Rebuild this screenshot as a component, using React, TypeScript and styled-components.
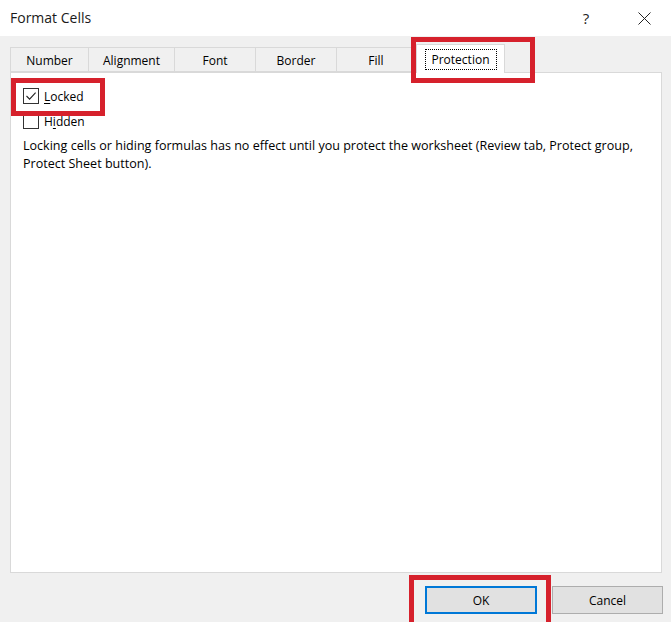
import React from "react";
import styled, { createGlobalStyle } from "styled-components";

const Global = createGlobalStyle`
  html, body { margin: 0; padding: 0; background: #f0f0f0; }
  body { font-family: "Open Sans", "Noto Sans", sans-serif; color: #000; }
`;

const Dialog = styled.div`
  position: relative;
  width: 671px;
  height: 622px;
  background: #f0f0f0;
  display: flex;
  flex-direction: column;
  overflow: hidden;
`;

const TitleBar = styled.div`
  height: 36px;
  background: #fff;
  display: flex;
  align-items: center;
  padding-left: 10px;
  box-sizing: border-box;
`;

const Title = styled.div`
  font-size: 14px;
  color: #1a1a1a;
  flex: 1;
  margin-top: -1px;
`;

const TitleButton = styled.div<{ $w: number }>`
  width: ${(p) => p.$w}px;
  height: 36px;
  display: flex;
  align-items: center;
  justify-content: center;
  font-size: 15px;
  color: #222;
`;

const Body = styled.div`
  padding: 11px 9px 0 10px;
  display: flex;
  flex-direction: column;
`;

const TabRow = styled.div`
  display: flex;
  height: 25px;
  align-items: flex-end;
  position: relative;
  z-index: 1;
`;

const Tab = styled.div<{ $w: number; $active?: boolean }>`
  width: ${(p) => p.$w}px;
  box-sizing: border-box;
  height: ${(p) => (p.$active ? 29 : 25)}px;
  margin-bottom: ${(p) => (p.$active ? -1 : 0)}px;
  background: ${(p) => (p.$active ? "#fff" : "#f0f0f0")};
  border: 1px solid #d9d9d9;
  border-bottom: ${(p) => (p.$active ? "none" : "1px solid #d9d9d9")};
  border-left: ${(p) => (p.$active ? "1px solid #d9d9d9" : "none")};
  &:first-child { border-left: 1px solid #d9d9d9; }
  display: flex;
  align-items: center;
  justify-content: center;
  font-size: 12px;
  padding-top: ${(p) => (p.$active ? 1 : 2)}px;
`;

const FocusLabel = styled.span`
  outline: 1px dotted #000;
  outline-offset: 0;
  padding: 2px 6px;
  line-height: 15px;
`;

const Panel = styled.div`
  height: 501px;
  box-sizing: border-box;
  background: #fff;
  border: 1px solid #d9d9d9;
  padding: 14px 0 0 12px;
  display: flex;
  flex-direction: column;
`;

const CheckRow = styled.label`
  display: flex;
  align-items: center;
  gap: 5px;
  height: 18px;
  font-size: 12px;
  margin-bottom: 7px;
`;

const Box = styled.span`
  width: 16px;
  height: 16px;
  box-sizing: border-box;
  border: 1px solid #333;
  background: #fff;
  display: flex;
  align-items: center;
  justify-content: center;
`;

const U = styled.span`
  text-decoration: underline;
  text-underline-offset: 2px;
`;

const Note = styled.p`
  margin: 0;
  font-size: 12.55px;
  line-height: 18px;
  width: 625px;
`;

const ButtonRow = styled.div`
  display: flex;
  justify-content: flex-end;
  gap: 15px;
  padding-top: 13px;
  margin-right: -1px;
`;

const Button = styled.div<{ $default?: boolean }>`
  width: ${(p) => (p.$default ? 112 : 111)}px;
  height: 28px;
  box-sizing: border-box;
  background: #e1e1e1;
  border: ${(p) => (p.$default ? "2px solid #0078d7" : "1px solid #adadad")};
  display: flex;
  align-items: center;
  justify-content: center;
  font-size: 12px;
  padding-top: 1px;
`;

const Highlight = styled.div<{ $x: number; $y: number; $w: number; $h: number }>`
  position: absolute;
  left: ${(p) => p.$x}px;
  top: ${(p) => p.$y}px;
  width: ${(p) => p.$w}px;
  height: ${(p) => p.$h}px;
  box-sizing: border-box;
  border: 5px solid #d6212c;
  pointer-events: none;
  z-index: 5;
`;

const tabs: { label: string; w: number }[] = [
  { label: "Number", w: 79 },
  { label: "Alignment", w: 86 },
  { label: "Font", w: 81 },
  { label: "Border", w: 81 },
  { label: "Fill", w: 79 },
];

export default function App() {
  return (
    <>
      <Global />
      <Dialog>
        <TitleBar>
          <Title>Format Cells</Title>
          <TitleButton $w={62}>?</TitleButton>
          <TitleButton $w={54}>
            <svg width="13" height="13" viewBox="0 0 13 13">
              <path d="M0.5 0.5 L12.5 12.5 M12.5 0.5 L0.5 12.5" stroke="#222" strokeWidth="1" />
            </svg>
          </TitleButton>
        </TitleBar>
        <Body>
          <TabRow>
            {tabs.map((t) => (
              <Tab key={t.label} $w={t.w}>
                {t.label}
              </Tab>
            ))}
            <Tab $w={89} $active>
              <FocusLabel>Protection</FocusLabel>
            </Tab>
          </TabRow>
          <Panel>
            <CheckRow>
              <Box>
                <svg width="12" height="12" viewBox="0 0 12 12">
                  <path d="M1.5 6 L4.6 9.1 L10.6 2.6" fill="none" stroke="#222" strokeWidth="1.1" />
                </svg>
              </Box>
              <span>
                <U>L</U>ocked
              </span>
            </CheckRow>
            <CheckRow>
              <Box />
              <span>
                H<U>i</U>dden
              </span>
            </CheckRow>
            <Note>
              Locking cells or hiding formulas has no effect until you protect the worksheet (Review tab, Protect group,
              Protect Sheet button).
            </Note>
          </Panel>
          <ButtonRow>
            <Button $default>OK</Button>
            <Button>Cancel</Button>
          </ButtonRow>
        </Body>
        <Highlight $x={11} $y={78} $w={94} $h={38} />
        <Highlight $x={411} $y={37} $w={124} $h={46} />
        <Highlight $x={409} $y={575} $w={142} $h={52} />
      </Dialog>
    </>
  );
}
